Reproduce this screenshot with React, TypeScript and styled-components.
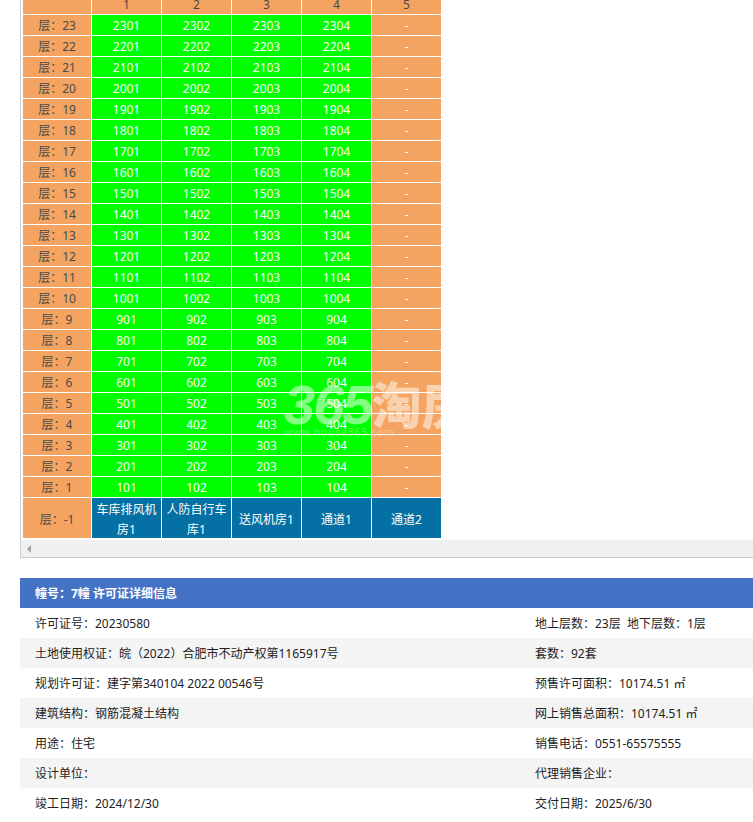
import React from "react";
import styled, { createGlobalStyle } from "styled-components";

const GlobalStyle = createGlobalStyle`
  html, body {
    margin: 0;
    padding: 0;
    height: 822px;
    overflow: hidden;
    background: #fff;
    font-family: "Noto Sans", "Noto Sans CJK SC", sans-serif;
    font-size: 12px;
    color: #333;
  }
`;

const Page = styled.div`
  width: 753px;
  height: 822px;
  overflow: hidden;
  padding-left: 20px;
  box-sizing: border-box;
`;

const Frame = styled.div`
  position: relative;
  width: 740px;
  margin-top: -6px;
  border-left: 1px solid #ccc;
  border-bottom: 1px solid #ccc;
  overflow: hidden;
  padding-left: 2px;
`;

const Table = styled.div`
  display: grid;
  grid-template-columns: 68px repeat(5, 69px);
  gap: 1px;
  width: 418px;
`;

const Cell = styled.div<{ $kind: "floor" | "room" | "empty" | "service" }>`
  height: 20px;
  line-height: 22px;
  text-align: center;
  background: ${(p) =>
    p.$kind === "room" ? "#00ff00" : p.$kind === "service" ? "#0570a3" : "#f4a460"};
  color: ${(p) => (p.$kind === "floor" ? "#4a4a4a" : "#fff")};
`;

const ServiceCell = styled(Cell)`
  display: flex;
  align-items: center;
  justify-content: center;
  padding: 3px 4px 0;
  height: 40px;
  line-height: 20px;
  box-sizing: border-box;
`;

const FloorTall = styled(Cell)`
  display: flex;
  align-items: center;
  justify-content: center;
  height: 40px;
  padding-top: 3px;
  line-height: 20px;
  box-sizing: border-box;
`;

const ScrollBar = styled.div`
  height: 17px;
  margin-top: 2px;
  margin-left: -2px;
  background: #f0f0f0;
  display: flex;
  align-items: center;
  padding-left: 6px;
`;

const ScrollArrow = styled.span`
  width: 0;
  height: 0;
  border-top: 4px solid transparent;
  border-bottom: 4px solid transparent;
  border-right: 4px solid #a3a3a3;
`;

const Watermark = styled.div`
  position: absolute;
  left: 263px;
  top: 382px;
  color: rgba(255, 255, 255, 0.5);
  pointer-events: none;
`;

const WatermarkMark = styled.div`
  display: flex;
  align-items: baseline;
  font-family: "Liberation Sans", "Noto Sans CJK SC", sans-serif;
  font-size: 56px;
  line-height: 52px;
  font-weight: 700;
  white-space: nowrap;
`;

const WatermarkDigits = styled.span`
  font-style: italic;
  letter-spacing: -2px;
`;

const WatermarkHan = styled.span`
  font-family: "Noto Sans CJK SC", sans-serif;
  font-size: 50px;
  font-weight: 900;
`;

const WatermarkUrl = styled.div`
  margin-top: -5px;
  font-size: 10px;
  line-height: 12px;
  letter-spacing: 1px;
  color: rgba(255, 255, 255, 0.35);
`;

const Panel = styled.section`
  margin-top: 20px;
  width: 733px;
`;

const PanelTitle = styled.h3`
  margin: 0;
  height: 30px;
  line-height: 32px;
  padding-left: 15px;
  background: #4472c4;
  color: #fff;
  font-size: 12px;
  font-weight: 700;
`;

const InfoRow = styled.div`
  display: grid;
  grid-template-columns: 500px 1fr;
  height: 30px;
  line-height: 32px;
  padding-left: 15px;
  color: #222;
  &:nth-of-type(even) {
    background: #f4f4f4;
  }
`;

const InfoText = styled.span`
  white-space: pre;
`;

const floors = Array.from({ length: 23 }, (_, i) => 23 - i);
const units = [1, 2, 3, 4];
const services = ["车库排风机房1", "人防自行车库1", "送风机房1", "通道1", "通道2"];

const info: [string, string][] = [
  ["许可证号：20230580", "地上层数：23层  地下层数：1层"],
  ["土地使用权证：皖（2022）合肥市不动产权第1165917号", "套数：92套"],
  ["规划许可证：建字第340104 2022 00546号", "预售许可面积：10174.51 ㎡"],
  ["建筑结构：钢筋混凝土结构", "网上销售总面积：10174.51 ㎡"],
  ["用途：住宅", "销售电话：0551-65575555"],
  ["设计单位：", "代理销售企业："],
  ["竣工日期：2024/12/30", "交付日期：2025/6/30"],
];

export default function App() {
  return (
    <Page>
      <GlobalStyle />
      <Frame>
        <Table>
          <Cell $kind="floor" />
          {[1, 2, 3, 4, 5].map((n) => (
            <Cell key={n} $kind="floor">
              {n}
            </Cell>
          ))}
          {floors.map((f) => (
            <React.Fragment key={f}>
              <Cell $kind="floor">层：{f}</Cell>
              {units.map((u) => (
                <Cell key={u} $kind="room">
                  {f * 100 + u}
                </Cell>
              ))}
              <Cell $kind="empty">-</Cell>
            </React.Fragment>
          ))}
          <FloorTall $kind="floor">层：-1</FloorTall>
          {services.map((s) => (
            <ServiceCell key={s} $kind="service">
              {s}
            </ServiceCell>
          ))}
        </Table>
        <ScrollBar>
          <ScrollArrow />
        </ScrollBar>
        <Watermark>
          <WatermarkMark>
            <WatermarkDigits>365</WatermarkDigits>
            <WatermarkHan>淘房</WatermarkHan>
          </WatermarkMark>
          <WatermarkUrl>www.house365.com</WatermarkUrl>
        </Watermark>
      </Frame>
      <Panel>
        <PanelTitle>幢号：7幢 许可证详细信息</PanelTitle>
        {info.map(([left, right]) => (
          <InfoRow key={left}>
            <InfoText>{left}</InfoText>
            <InfoText>{right}</InfoText>
          </InfoRow>
        ))}
      </Panel>
    </Page>
  );
}
